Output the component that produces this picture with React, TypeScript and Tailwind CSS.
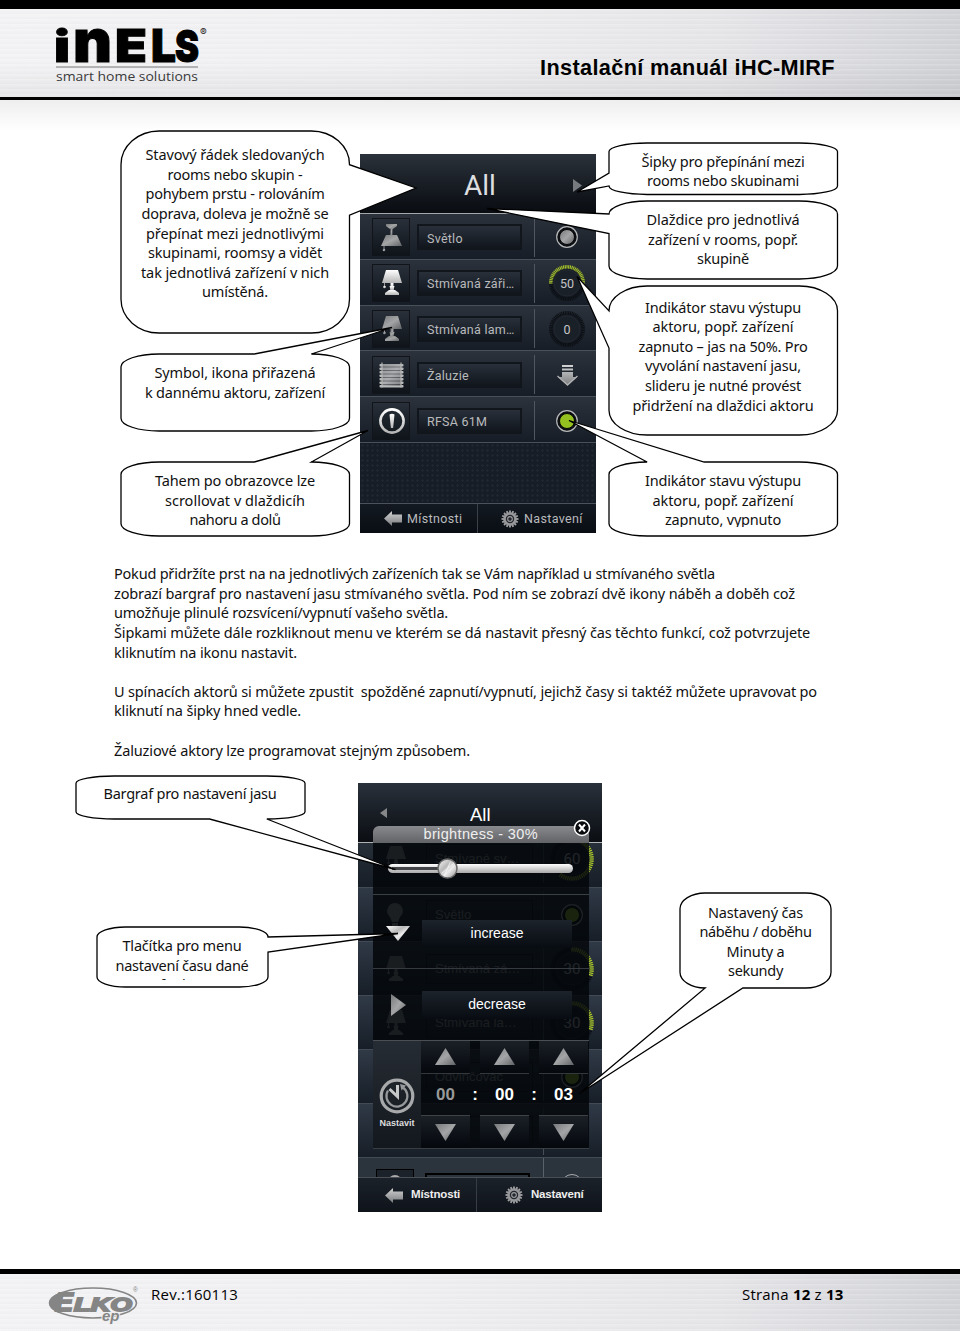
import React, { useLayoutEffect, useRef, useState } from 'react';

type Side = 'top' | 'right' | 'bottom' | 'left';

interface TextLine {
  text: string;
  width: number;
}

interface CalloutProps {
  width: number;
  height: number;
  side: Side;
  far?: boolean; // tail sits on the second half of the side
  tip: [number, number];
  className: string;
  children: React.ReactNode;
}

// One line of copy, tracked so that it fills the given width
function FitLine({ text, width }: TextLine) {
  const ref = useRef<HTMLSpanElement>(null);
  const [spacing, setSpacing] = useState(0);

  useLayoutEffect(() => {
    if (ref.current && width > 0) {
      const natural = ref.current.getBoundingClientRect().width;
      setSpacing((width - natural) / text.length);
    }
  }, [text, width]);

  return (
    <span className="block h-[19.65px] whitespace-pre">
      <span ref={ref} className="inline-block" style={{ letterSpacing: `${spacing}px` }}>
        {text}
      </span>
    </span>
  );
}

function Lines({ lines }: { lines: TextLine[] }) {
  return (
    <>
      {lines.map((line, i) => (
        <FitLine key={i} {...line} />
      ))}
    </>
  );
}

function calloutPath(w: number, h: number, side: Side, far: boolean, [tx, ty]: [number, number]) {
  const rx = w / 6;
  const ry = h / 6;
  const a = far ? 7 / 12 : 1 / 6;
  const b = far ? 10 / 12 : 5 / 12;
  const tail = (s: Side) => {
    if (s !== side) return '';
    if (s === 'top') return `L${w * a} 0 L${tx} ${ty} L${w * b} 0`;
    if (s === 'right') return `L${w} ${h * a} L${tx} ${ty} L${w} ${h * b}`;
    if (s === 'bottom') return `L${w * b} ${h} L${tx} ${ty} L${w * a} ${h}`;
    return `L0 ${h * b} L${tx} ${ty} L0 ${h * a}`;
  };
  return [
    `M${rx} 0`, tail('top'), `L${w - rx} 0 A${rx} ${ry} 0 0 1 ${w} ${ry}`,
    tail('right'), `L${w} ${h - ry} A${rx} ${ry} 0 0 1 ${w - rx} ${h}`,
    tail('bottom'), `L${rx} ${h} A${rx} ${ry} 0 0 1 0 ${h - ry}`,
    tail('left'), `L0 ${ry} A${rx} ${ry} 0 0 1 ${rx} 0 Z`,
  ].join(' ');
}

function Callout({ width, height, side, far = false, tip, className, children }: CalloutProps) {
  return (
    <div className={`relative shrink-0 text-center ${className}`}>
      <svg className="absolute inset-0 overflow-visible" width={width} height={height}>
        <path d={calloutPath(width, height, side, far, tip)} fill="#fff" stroke="#000" strokeWidth="1.3" />
      </svg>
      <div className="relative">{children}</div>
    </div>
  );
}

/* ---------- icons ---------- */

function Gradients() {
  return (
    <svg className="absolute" width="0" height="0">
      <defs>
        <linearGradient id="silver" x1="0" y1="0" x2="0" y2="1">
          <stop offset="0" stopColor="#d4d4d4" />
          <stop offset="1" stopColor="#77797c" />
        </linearGradient>
        <linearGradient id="bright" x1="0" y1="0" x2="0" y2="1">
          <stop offset="0" stopColor="#ffffff" />
          <stop offset="1" stopColor="#b5b5b5" />
        </linearGradient>
        <linearGradient id="dull" x1="0" y1="0" x2="1" y2="1">
          <stop offset="0" stopColor="#77797b" />
          <stop offset="0.5" stopColor="#a4a5a6" />
          <stop offset="1" stopColor="#5f6265" />
        </linearGradient>
        <linearGradient id="knob" x1="0" y1="0" x2="1" y2="1">
          <stop offset="0" stopColor="#ffffff" />
          <stop offset="0.4" stopColor="#b9b9b9" />
          <stop offset="0.6" stopColor="#ececec" />
          <stop offset="1" stopColor="#8d8d8d" />
        </linearGradient>
      </defs>
    </svg>
  );
}

function CeilingLamp() {
  return (
    <svg width="36" height="36" viewBox="0 0 36 36" fill="url(#dull)">
      <path d="M13 5h11v2l-4 3h-3l-4-3z" />
      <rect x="17.500" y="9" width="2" height="7" />
      <path d="M13 16h11l5 11H8z" />
      <path d="M11 27v4" stroke="#8b8d8f" />
      <circle cx="11" cy="31" r="1.3" />
    </svg>
  );
}

function TableLamp({ fill }: { fill: string }) {
  return (
    <svg width="36" height="36" viewBox="0 0 36 36" fill={fill}>
      <path d="M13 5h12l4 13H9z" />
      <path d="M11.500 18v3" stroke="#999" />
      <circle cx="11.500" cy="22" r="1.300" />
      <rect x="17.500" y="18" width="3" height="8" />
      <path d="M16.500 21h5l-1 4h-3z" />
      <path d="M16 25h6l4 3v2H12v-2z" />
    </svg>
  );
}

function Blinds() {
  return (
    <svg width="36" height="36" viewBox="0 0 36 36">
      {[7, 10.5, 14, 17.5, 21, 24.5, 28].map((y) => (
        <rect key={y} x="6.500" y={y} width="24" height="2.5" rx="0.8" fill="#b9babb" />
      ))}
      <rect x="9" y="7" width="19" height="22" fill="url(#dull)" opacity="0.6" />
      <path d="M9 5.500v25M28 5.500v25" stroke="#b5b5b5" strokeWidth="1.2" />
    </svg>
  );
}

function Alert() {
  return (
    <svg width="36" height="36" viewBox="0 0 36 36">
      <circle cx="19" cy="18" r="11.600" fill="none" stroke="url(#bright)" strokeWidth="2.600" />
      <path d="M16.500 11.500q2.500-1.500 5 0l-1.400 13.500h-2.200z" fill="url(#bright)" />
    </svg>
  );
}

function Bulb() {
  return (
    <svg width="36" height="36" viewBox="0 0 36 36" fill="#aaa">
      <path d="M18 6a8 8 0 0 1 5 14l-2 5h-6l-2-5a8 8 0 0 1 5-14zM15 26h6v4h-6z" />
    </svg>
  );
}

function Dial({ value, size = 38, start = -Math.PI }: { value: number; size?: number; start?: number }) {
  const ticks = Array.from({ length: 60 }, (_, i) => i);
  return (
    <svg className="shrink-0" width={size} height={size} viewBox="-19 -19 38 38">
      <circle r="15.500" fill="#11161c" fillOpacity="0.6" />
      {ticks.map((i) => {
        const t = (Math.PI * 2 * i) / 60 + start;
        const lit = value > 0 && i <= (value / 100) * 60;
        return (
          <line
            key={i}
            x1={Math.cos(t) * 14.5}
            y1={Math.sin(t) * 14.5}
            x2={Math.cos(t) * 18}
            y2={Math.sin(t) * 18}
            stroke={lit ? '#a9c62b' : '#0b0f14'}
            strokeWidth="1.100"
          />
        );
      })}
      <circle r="13" fill="#1a2028" stroke="#242a32" strokeWidth="0.8" />
      <text y="4.500" textAnchor="middle" fontSize="12.500" fontFamily="Roboto" fill="#c4c5c6">
        {value}
      </text>
    </svg>
  );
}

function Led({ fill }: { fill: string }) {
  return (
    <svg width="24" height="24" viewBox="-12 -12 24 24">
      <circle r="10.300" fill="#0b0e12" stroke="#b7b8b9" strokeWidth="1.200" />
      <circle r="7.500" fill={fill} stroke="#080808" />
    </svg>
  );
}

function BlindArrow() {
  return (
    <svg width="24" height="24" viewBox="0 0 24 24" fill="url(#silver)">
      <path d="M7 2h11v2H7zM7 5.500h11v2H7zM7 9h11v5h4l-9.500 9L3 14h4z" />
      <path d="M2.500 13l10 9 10-9" fill="none" stroke="#b2b3b5" strokeWidth="1.300" />
    </svg>
  );
}

function BackArrow() {
  return (
    <svg width="18" height="15" viewBox="0 0 18 15">
      <path d="M0 7.500L8 0v3.500h10v8H8V15z" fill="url(#silver)" />
    </svg>
  );
}

function Gear() {
  const teeth = Array.from({ length: 16 }, (_, i) => i * 22.5);
  return (
    <svg width="18" height="18" viewBox="-9 -9 18 18">
      {teeth.map((t) => (
        <rect key={t} x="-0.900" y="-8.500" width="1.800" height="3" fill="#a0a1a3" transform={`rotate(${t})`} />
      ))}
      <circle r="5.500" fill="#24282e" stroke="#96989a" strokeWidth="2.600" />
      <circle r="2.300" fill="none" stroke="#9a9b9d" strokeWidth="1.200" />
    </svg>
  );
}

function Triangle({ points, width, height, fill = 'url(#dull)' }: { points: string; width: number; height: number; fill?: string }) {
  return (
    <svg width={width} height={height}>
      <polygon points={points} fill={fill} />
    </svg>
  );
}

function Clock() {
  return (
    <svg width="36" height="36" viewBox="-18 -18 36 36" fill="none">
      <circle r="15.800" stroke="#a8a9ab" strokeWidth="3.200" />
      <path d="M-9 -5.500A10.500 10.500 0 1 0 6 -8.500" stroke="#97999b" strokeWidth="2.200" />
      <path d="M3 -12l6 1.500-4.500 5z" fill="#97999b" />
      <path d="M-7.500 -7L0.500 0.500V-11" stroke="#c6c7c8" strokeWidth="3" />
    </svg>
  );
}

/* ---------- brand marks ---------- */

function InelsLogo() {
  return (
    <svg className="overflow-visible" width="170" height="64" viewBox="0 0 170 64" fontFamily="Inter, sans-serif" fontWeight="900">
      <g stroke="#000" strokeWidth="1">
        <text x="0" y="38" fontSize="43" textLength="16" lengthAdjust="spacingAndGlyphs">i</text>
        <text x="19" y="38" fontSize="59" textLength="39" lengthAdjust="spacingAndGlyphs">n</text>
        <text x="61" y="38" fontSize="46" textLength="32" lengthAdjust="spacingAndGlyphs">E</text>
        <text x="97" y="38" fontSize="46" textLength="25" lengthAdjust="spacingAndGlyphs">L</text>
        <text x="121" y="37.500" fontSize="44.500" textLength="24" lengthAdjust="spacingAndGlyphs">S</text>
      </g>
      <text x="146" y="12" fontSize="10" fontWeight="400" fill="#222">®</text>
      <line x1="2" x2="144" y1="43" y2="43" stroke="#777" strokeWidth="1" />
      <text x="2" y="56.500" fontSize="13.500" fontFamily="'Open Sans'" fontWeight="400" fill="#3a3a3a" textLength="142" lengthAdjust="spacingAndGlyphs">
        smart home solutions
      </text>
    </svg>
  );
}

function ElkoLogo() {
  return (
    <svg className="overflow-visible" width="92" height="38" viewBox="0 0 92 38" fontFamily="'Liberation Sans'" fill="#858585">
      <ellipse cx="46" cy="17" rx="43.500" ry="15" fill="none" stroke="#858585" strokeWidth="1.600" />
      <path d="M12 7C-1 12-1 22 12 27z" />
      <g fontWeight="700" fontStyle="italic" stroke="#858585" strokeWidth="1.800">
        <text x="8" y="25" fontSize="26" textLength="18" lengthAdjust="spacingAndGlyphs">E</text>
        <text x="27" y="24.500" fontSize="18.500" textLength="58" lengthAdjust="spacingAndGlyphs">LKO</text>
      </g>
      <text x="55" y="34.500" fontSize="15" fontStyle="italic" fontWeight="700" stroke="#eee" strokeWidth="2" paintOrder="stroke">ep</text>
      <text x="86" y="6" fontSize="6.500">®</text>
    </svg>
  );
}

/* ---------- phone screens ---------- */

interface Device {
  name: string;
  icon: React.ReactNode;
  status: React.ReactNode;
}

const devices: Device[] = [
  { name: 'Světlo', icon: <CeilingLamp />, status: <Led fill="url(#dull)" /> },
  { name: 'Stmívaná záři…', icon: <TableLamp fill="url(#bright)" />, status: <Dial value={50} /> },
  { name: 'Stmívaná lam…', icon: <TableLamp fill="url(#dull)" />, status: <Dial value={0} /> },
  { name: 'Žaluzie', icon: <Blinds />, status: <BlindArrow /> },
  { name: 'RFSA 61M', icon: <Alert />, status: <Led fill="#94c11f" /> },
];

function DeviceList() {
  return (
    <div className="flex h-[379px] w-[236px] flex-col bg-[#11171f] font-['Roboto',sans-serif] text-[#b9bbbd]">
      <div className="flex h-[60px] items-center border-b border-[#a4a7aa] bg-linear-to-b from-[#2b323b] to-[#090c11] pl-[104px]">
        <span className="w-[76px] pt-[5px] text-[28px] leading-none text-[#dedfe0]">All</span>
        <div className="ml-[33px] pt-1">
          <Triangle width={9} height={13} points="0,0 9,6.5 0,13" fill="#777b80" />
        </div>
      </div>
      {devices.map((device) => (
        <div key={device.name} className="flex h-[45.800px] items-center border-b border-[#485058] bg-linear-to-b from-[#2b323c] to-[#171d26] pl-3 pt-[2px]">
          <div className="flex h-[38px] w-[38px] items-center justify-center border border-[#11151a] bg-linear-to-b from-[#29303a] to-[#0f141a]">
            {device.icon}
          </div>
          <div className="ml-[7px] flex h-[26px] w-[105px] items-center border-2 border-[#11161c] bg-linear-to-b from-[#29303a] to-[#11161d] pl-[8px] pt-[2px] text-[12.500px] tracking-[0.250px]">
            {device.name}
          </div>
          <div className="ml-[12px] h-[39px] w-px bg-[#50565e]" />
          <div className="flex flex-1 items-center justify-center pl-[2px]">{device.status}</div>
        </div>
      ))}
      <div className="flex-1 bg-[#161d26] bg-[radial-gradient(#1e262f_1px,transparent_1.500px)] bg-[size:5px_5px]" />
      <div className="flex h-[30px] border-t border-[#4b5259] bg-linear-to-b from-[#141a22] to-[#090d13] text-[12.500px] tracking-[0.350px]">
        <div className="flex w-[118px] items-center gap-[5px] border-r border-[#3b4148] pl-6">
          <BackArrow />
          Místnosti
        </div>
        <div className="flex items-center gap-[5px] pl-[23px]">
          <Gear />
          Nastavení
        </div>
      </div>
    </div>
  );
}

const RIGHT_START = -Math.PI / 2;

const hiddenRows: Device[] = [
  { name: 'Světlo', icon: <Bulb />, status: <Led fill="#94c11f" /> },
  { name: 'Stmívaná zá…', icon: <TableLamp fill="#999" />, status: <Dial value={30} size={46} start={RIGHT_START} /> },
  { name: 'Stmívaná la…', icon: <TableLamp fill="#999" />, status: <Dial value={30} size={46} start={RIGHT_START} /> },
  { name: 'Odvlhčovač', icon: <Bulb />, status: <Led fill="#94c11f" /> },
  { name: '', icon: <Alert />, status: <Led fill="#333" /> },
];

function HiddenContent({ name, icon, status }: Device) {
  return (
    <>
      <div className="flex w-[38px] justify-center">{icon}</div>
      <div className="ml-[12px] flex h-[30px] w-[107px] items-center border border-[#11151a] pl-2">{name}</div>
      <div className="ml-[10px] h-[48px] w-px bg-[#484f58]" />
      <div className="flex flex-1 justify-center pr-[3px]">{status}</div>
    </>
  );
}

function TimeColumn({ digits, className }: { digits: string; className: string }) {
  return (
    <div className="flex w-[49px] flex-col items-center">
      <div className="flex h-[34px] w-full items-center justify-center border-b border-[#33383d] bg-linear-to-b from-[#1b2027] to-[#05080d]">
        <Triangle width={21} height={17} points="10.500,0 21,17 0,17" />
      </div>
      <div className={`flex h-[41px] items-center text-[17px] ${className}`}>{digits}</div>
      <div className="flex h-[33px] w-full items-center justify-center border-t border-[#3d4247] bg-linear-to-b from-[#1b2027] to-[#05080d]">
        <Triangle width={21} height={17} points="0,0 21,0 10.500,17" />
      </div>
    </div>
  );
}

function BrightnessPanel() {
  return (
    <div className="absolute left-[15px] top-[43px] h-[323px] w-[215.500px] text-white">
      <div className="flex h-[16.500px] items-center justify-center rounded-t-[6px] bg-linear-to-b from-[#898a8e] to-[#626367] pt-[2px] text-[14.500px] tracking-[0.350px] text-[#efefef]">
        brightness - 30%
      </div>
      <div className="flex h-[52px] items-center justify-center border-b border-[#3b4044] bg-[#03070a]/85">
        <div className="relative h-[9px] w-[185px] rounded-full bg-linear-to-b from-white to-[#a9a9a9]">
          <div className="ml-1 h-full w-[54px] py-[3px]">
            <div className="h-[3px] bg-[#424346]" />
          </div>
          <svg className="absolute -top-[6px] left-[49px]" width="21" height="21" viewBox="-10.500 -10.500 21 21">
            <circle r="9.500" fill="url(#knob)" stroke="#6a6a6a" strokeWidth="1.500" />
            <path d="M-6 5L6 -5M-3 7L3 -7" stroke="#fff" strokeWidth="1" opacity="0.7" />
          </svg>
        </div>
      </div>
      <div className="flex h-[74px] items-center border-b border-[#343a3f] bg-[#03070a]/85 pl-[13px] pt-[5px]">
        <Triangle width={24} height={15} points="0,0 24,0 12,15" fill="url(#knob)" />
        <div className="ml-3 flex h-[28px] w-[150px] items-center justify-center bg-linear-to-b from-[#1d232b] to-[#080c12] text-[14px]">increase</div>
      </div>
      <div className="flex h-[72px] items-center border-b border-[#4b4f53] bg-[#03070a]/85 pl-[18px] pt-[2px]">
        <Triangle width={15} height={22} points="0,0 15,11 0,22" />
        <div className="ml-4 flex h-[28px] w-[150px] items-center justify-center bg-linear-to-b from-[#1d232b] to-[#080c12] text-[14px]">decrease</div>
      </div>
      <div className="flex h-[108.500px] border-b border-[#383d42] bg-[#03070a]/85">
        <div className="flex w-[48px] flex-col items-center bg-linear-to-b from-[#262c33] to-[#13181e] pt-[37px]">
          <Clock />
          <span className="text-[9px] font-bold text-[#ddd]">Nastavit</span>
        </div>
        <div className="flex w-[167px] justify-between text-[17px] font-bold">
          <TimeColumn digits="00" className="text-[#999]" />
          <span className="-mx-1 pt-[44px]">:</span>
          <TimeColumn digits="00" className="text-white" />
          <span className="-mx-1 pt-[44px]">:</span>
          <TimeColumn digits="03" className="text-white" />
        </div>
      </div>
      <svg className="absolute -top-[7px] left-[200px]" width="18" height="18" viewBox="-9 -9 18 18">
        <circle r="7.500" fill="#080a0d" stroke="#fff" strokeWidth="1.500" />
        <path d="M-3 -3.500L3 3.500M3 -3.500L-3 3.500" stroke="#fff" strokeWidth="2" />
      </svg>
    </div>
  );
}

function BrightnessScreen() {
  return (
    <div className="relative flex h-[429px] w-[244px] flex-col overflow-hidden bg-[#11171f] font-['Liberation_Sans',sans-serif] text-[13px] text-[#999]">
      <div className="flex h-[60px] shrink-0 items-center border-b border-[#b1b3b5] bg-linear-to-b from-[#29313b] to-[#0b0e13] pl-[22px]">
        <Triangle width={7} height={10} points="7,0 0,5 7,10" fill="#858789" />
        <span className="ml-[83px] pt-[4px] text-[18.500px] text-white">All</span>
      </div>
      <div className="flex h-[45px] shrink-0 items-center border-b border-[#424b55] bg-linear-to-b from-[#272f39] to-[#171e28] pb-3 pl-[18px]">
        <HiddenContent name="Stmívané sv…" icon={<TableLamp fill="#999" />} status={<Dial value={60} size={46} start={RIGHT_START} />} />
      </div>
      {hiddenRows.map((row, i) => (
        <div key={i} className="flex h-[54px] shrink-0 items-center border-b border-[#424b55] bg-linear-to-b from-[#303946] to-[#171e28] pl-[18px]">
          <HiddenContent {...row} />
        </div>
      ))}
      <div className="flex h-[19px] shrink-0 overflow-hidden bg-[#2b333d] pl-[18px]">
        <div className="mt-[11px] flex h-[38px] w-[38px] justify-center border border-black bg-[#1c222a] pt-[5px]">
          <div className="h-[10px] w-[14px] rounded-t-full bg-[#aaa]" />
        </div>
        <div className="ml-[11px] mt-[15px] h-[30px] w-[105px] border-2 border-black" />
        <div className="ml-[13px] w-px bg-[#59616a]" />
        <div className="ml-[17px] mt-[16px] h-[22px] w-[22px] rounded-full border border-[#aaa]" />
      </div>
      <div className="flex h-[35px] shrink-0 border-t border-[#4a4f55] bg-linear-to-b from-[#1b2129] to-[#0f141b] text-[11.500px] font-bold text-[#eee]">
        <div className="flex w-[119px] items-center gap-2 border-r border-[#373d44] pl-[27px] tracking-[-0.150px]">
          <BackArrow />
          Místnosti
        </div>
        <div className="flex items-center gap-2 pl-[28px] tracking-[-0.200px]">
          <Gear />
          Nastavení
        </div>
      </div>
      <BrightnessPanel />
    </div>
  );
}

const bodyText: TextLine[] = [
  { text: 'Pokud přidržíte prst na na jednotlivých zařízeních tak se Vám například u stmívaného světla', width: 601 },
  { text: 'zobrazí bargraf pro nastavení jasu stmívaného světla. Pod ním se zobrazí dvě ikony náběh a doběh což', width: 681 },
  { text: 'umožňuje plinulé rozsvícení/vypnutí vašeho světla.', width: 334 },
  { text: 'Šipkami můžete dále rozkliknout menu ve kterém se dá nastavit přesný čas těchto funkcí, což potvrzujete', width: 696 },
  { text: 'kliknutím na ikonu nastavit.', width: 183 },
  { text: '', width: 0 },
  { text: 'U spínacích aktorů si můžete zpustit  spožděné zapnutí/vypnutí, jejichž časy si taktéž můžete upravovat po', width: 703 },
  { text: 'kliknutí na šipky hned vedle.', width: 187 },
  { text: '', width: 0 },
  { text: 'Žaluziové aktory lze programovat stejným způsobem.', width: 356 },
];

export default function App() {
  return (
    <div className="flex h-[1331px] w-[960px] flex-col overflow-hidden bg-white font-['Noto_Sans',sans-serif] text-[14.500px] leading-[19.650px] text-[#111]">
      <Gradients />
      <header className="flex h-[100px] shrink-0 border-b-[3px] border-t-[9px] border-black bg-[repeating-linear-gradient(180deg,rgba(255,255,255,0.2)_0px,transparent_2px,rgba(120,120,130,0.03)_5px),linear-gradient(180deg,transparent_60%,rgba(0,0,0,0.05)),linear-gradient(90deg,#f3f3f5,#f0f0f2_40%,#e6e6e9_75%,#d2d3d7)]">
        <div className="ml-[54px] mt-[15px]">
          <InelsLogo />
        </div>
        <h1 className="ml-[316px] mt-[45px] whitespace-nowrap font-['Liberation_Sans',sans-serif] text-[21.700px] font-bold leading-[28px] tracking-[0.360px] text-black">
          Instalační manuál iHC-MIRF
        </h1>
      </header>

      <section className="flex h-[464px] shrink-0 bg-[linear-gradient(180deg,#eee,#fff_30px)]">
        <div className="relative z-10 ml-[120.500px] flex w-[229px] flex-col">
          <Callout width={228.5} height={202} side="right" tip={[295, 57]} className="mt-[30.500px] h-[202px] pt-[14.500px]">
            <Lines
              lines={[
                { text: 'Stavový řádek sledovaných', width: 179 },
                { text: 'rooms nebo skupin -', width: 135 },
                { text: 'pohybem prstu - rolováním', width: 179 },
                { text: 'doprava, doleva je možně se', width: 187 },
                { text: 'přepínat mezi jednotlivými', width: 178 },
                { text: 'skupinami, roomsy a vidět', width: 174 },
                { text: 'tak jednotlivá zařízení v nich', width: 188 },
                { text: 'umístěná.', width: 66 },
              ]}
            />
          </Callout>
          <Callout width={228.5} height={77} side="top" far tip={[271, -26.5]} className="mt-[21px] h-[77px] pt-[9.500px]">
            <Lines
              lines={[
                { text: 'Symbol, ikona přiřazená', width: 161 },
                { text: 'k dannému aktoru, zařízení', width: 180 },
              ]}
            />
          </Callout>
          <Callout width={228.5} height={74} side="top" far tip={[247, -31.5]} className="mt-[31px] h-[74px] pt-[9.500px]">
            <Lines
              lines={[
                { text: 'Tahem po obrazovce lze', width: 160 },
                { text: 'scrollovat v dlaždicíh', width: 140 },
                { text: 'nahoru a dolů', width: 91 },
              ]}
            />
          </Callout>
        </div>

        <div className="ml-[10.500px] mt-[54px]">
          <DeviceList />
        </div>

        <div className="relative z-10 ml-[12.500px] flex w-[229px] flex-col">
          <Callout width={228.5} height={51.5} side="left" far tip={[-32, 49]} className="mt-[43px] h-[51.500px] pt-[8.500px]">
            <div className="h-[34.500px] overflow-hidden">
              <Lines
                lines={[
                  { text: 'Šipky pro přepínání mezi', width: 163 },
                  { text: 'rooms nebo skupinami', width: 152 },
                ]}
              />
            </div>
          </Callout>
          <Callout width={228.5} height={78} side="left" tip={[-122, 7.5]} className="mt-[6.500px] h-[78px] pt-[9px]">
            <Lines
              lines={[
                { text: 'Dlaždice pro jednotlivá', width: 153 },
                { text: 'zařízení v rooms, popř.', width: 150 },
                { text: 'skupině', width: 52 },
              ]}
            />
          </Callout>
          <Callout width={228.5} height={149} side="left" tip={[-32, -9.5]} className="mt-[6.500px] h-[149px] pt-[12px]">
            <Lines
              lines={[
                { text: 'Indikátor stavu výstupu', width: 156 },
                { text: 'aktoru, popř. zařízení', width: 141 },
                { text: 'zapnuto – jas na 50%. Pro', width: 169 },
                { text: 'vyvolání nastavení jasu,', width: 156 },
                { text: 'slideru je nutné provést', width: 156 },
                { text: 'přidržení na dlaždici aktoru', width: 181 },
              ]}
            />
          </Callout>
          <Callout width={228.5} height={74} side="top" tip={[-40, -41.5]} className="mt-[27px] h-[74px] pt-[9.500px]">
            <div className="h-[56px] overflow-hidden">
              <Lines
                lines={[
                  { text: 'Indikátor stavu výstupu', width: 156 },
                  { text: 'aktoru, popř. zařízení', width: 141 },
                  { text: 'zapnuto, vypnuto', width: 116 },
                ]}
              />
            </div>
          </Callout>
        </div>
      </section>

      <section className="h-[197px] shrink-0 pl-[114px]">
        <Lines lines={bodyText} />
      </section>

      <section className="flex h-[508px] shrink-0">
        <div className="relative z-10 flex w-[358px] flex-col">
          <Callout width={229} height={43} side="bottom" far tip={[319.5, 93.5]} className="ml-[75.500px] mt-[14.500px] h-[43px] w-[229px] pt-[8px]">
            <Lines lines={[{ text: 'Bargraf pro nastavení jasu', width: 173 }]} />
          </Callout>
          <Callout width={171} height={60} side="right" tip={[301, 6.5]} className="ml-[96.500px] mt-[108px] h-[60px] w-[171px] pt-[9.500px]">
            <div className="h-[43.500px] overflow-hidden">
              <Lines
                lines={[
                  { text: 'Tlačítka pro menu', width: 119 },
                  { text: 'nastavení času dané', width: 133 },
                  { text: 'funkce', width: 44 },
                ]}
              />
            </div>
          </Callout>
        </div>
        <div className="mt-[22px]">
          <BrightnessScreen />
        </div>
        <div className="relative z-10 ml-[78px] w-[151px]">
          <Callout width={151} height={95} side="bottom" tip={[-100.5, 200.5]} className="mt-[131.500px] h-[95px] pt-[10px]">
            <Lines
              lines={[
                { text: 'Nastavený čas', width: 95 },
                { text: 'náběhu / doběhu', width: 112 },
                { text: 'Minuty a', width: 58 },
                { text: 'sekundy', width: 55 },
              ]}
            />
          </Callout>
        </div>
      </section>

      <footer className="flex flex-1 border-t-[5px] border-black bg-[repeating-linear-gradient(180deg,rgba(255,255,255,0.2)_0px,transparent_2px,rgba(120,120,130,0.03)_5px),linear-gradient(90deg,#f3f3f5,#f0f0f2_40%,#e6e6e9_75%,#d2d3d7)] font-['Open_Sans',sans-serif] text-[15px] text-black">
        <div className="ml-[47px] mt-[12px] w-[104px]">
          <ElkoLogo />
        </div>
        <div className="mt-[11px] w-[591px]">
          <FitLine text="Rev.:160113" width={87} />
        </div>
        <p className="mt-[11px] whitespace-nowrap tracking-[0.200px]">
          Strana <b>12</b> z <b>13</b>
        </p>
      </footer>
    </div>
  );
}
